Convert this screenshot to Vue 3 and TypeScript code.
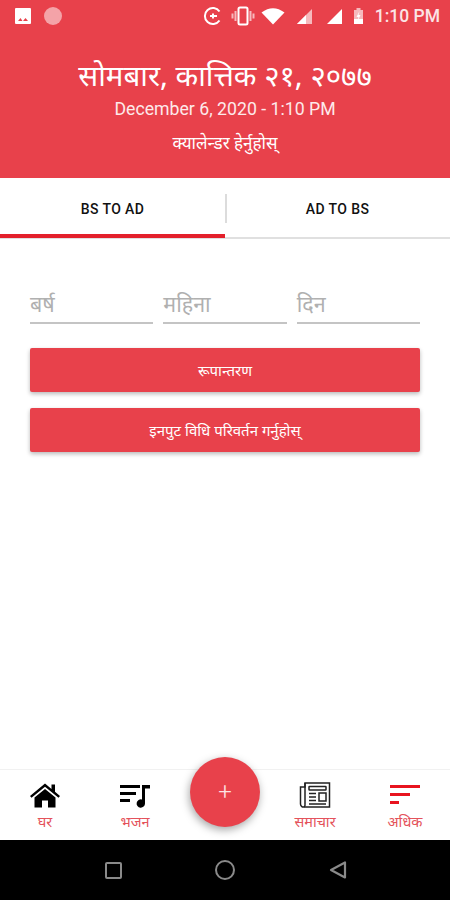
<template>
  <div class="screen">
    <header class="header">
      <div class="status-bar">
        <div class="status-left">
          <svg width="18" height="18" viewBox="0 0 18 18"><rect x="1" y="1" width="16" height="16" rx="1" fill="#fff" /><path d="M4 14l2.500-3 2 3zM9 14l2.500-3 2.500 3z" fill="#e8414b" /></svg>
          <span class="notif-dot"></span>
        </div>
        <div class="status-right">
          <svg class="i-sync" width="20" height="20" viewBox="0 0 20 20"><path d="M16.500 5.500A8 8 0 1 0 16.500 14.500" fill="none" stroke="#fff" stroke-width="2" /><path d="M7 10h7M10 7.500v5" stroke="#fff" stroke-width="2" /></svg>
          <svg class="i-vibrate" width="24" height="20" viewBox="0 0 24 20"><rect x="7.500" y="1.500" width="9" height="17" rx="1.500" fill="none" stroke="#fff" stroke-width="2" /><path d="M4.500 5v10M19.500 5v10M1.500 7.500v5M22.500 7.500v5" stroke="#f6b9bd" stroke-width="2" /></svg>
          <svg class="i-wifi" width="24" height="18" viewBox="0 0 24 18"><path d="M0.500 5.500Q12 -3 23.500 5.500L12 17.500z" fill="#fff" /></svg>
          <svg class="i-signal" width="17" height="17" viewBox="0 0 17 17"><path d="M16 1v15H1z" fill="#f6b9bd" /><path d="M10 7v9H1z" fill="#fff" /></svg>
          <svg class="i-signal2" width="17" height="17" viewBox="0 0 17 17"><path d="M16 1v15H1z" fill="#fff" /></svg>
          <svg class="i-battery" width="11" height="18" viewBox="0 0 11 18"><path d="M3.500 1h4v2H10v14H1V3h2.500z" fill="#f6b9bd" /><path d="M1 12h9v5H1z" fill="#fff" /><path d="M6.500 4L3.500 10h2l-1 4 3-6h-2z" fill="#fff" /></svg>
          <span class="clock">1:10 PM</span>
        </div>
      </div>
      <h1 class="nepali-date">सोमबार, कात्तिक २१, २०७७</h1>
      <p class="english-date">December 6, 2020 - 1:10 PM</p>
      <p class="calendar-link">क्यालेन्डर हेर्नुहोस्</p>
    </header>

    <nav class="tabs">
      <div class="tab active">BS TO AD</div>
      <div class="tab-divider"></div>
      <div class="tab">AD TO BS</div>
    </nav>

    <main class="content">
      <div class="inputs">
        <div v-for="field in fields" :key="field" class="input">{{ field }}</div>
      </div>
      <button class="action">रूपान्तरण</button>
      <button class="action">इनपुट विधि परिवर्तन गर्नुहोस्</button>
    </main>

    <footer class="bottom-nav">
      <div class="nav-item">
        <svg width="32" height="26" viewBox="0 0 32 26"><path d="M16 1.500L1 14l1.500 1.800L16 4.700l13.500 11.100L31 14l-5-4.200V2.500h-3.500v4.400z" fill="#000" /><path d="M16 7L5.500 15.500V25.500h7.500v-7h6v7h7.500V15.500z" fill="#000" /></svg>
        <span>घर</span>
      </div>
      <div class="nav-item">
        <svg width="32" height="26" viewBox="0 0 32 26"><path d="M1 3h20v3H1zM1 10h16v3H1zM1 17h10v3H1z" fill="#000" /><path d="M23 3h8v3.500h-5v15a4.200 4.200 0 1 1-3-4z" fill="#000" /></svg>
        <span>भजन</span>
      </div>
      <div class="nav-gap"></div>
      <div class="nav-item">
        <svg width="32" height="28" viewBox="0 0 32 28" fill="none" stroke="#222" stroke-width="1.500"><path d="M6 2h24.500v24H5a3 3 0 0 1-3.500-3V6H6z" /><path d="M6 2v21a3 3 0 0 1-1 3" /><rect x="10" y="5.500" width="17" height="3.500" rx="0.500" /><rect x="20" y="12" width="7" height="8" /><path d="M10 12.500h7M10 16h7M10 19.500h7M10 23h17" /></svg>
        <span>समाचार</span>
      </div>
      <div class="nav-item">
        <svg width="32" height="26" viewBox="0 0 32 26"><path d="M1 3h30v3H1zM1 11h20v3H1zM1 19h9v3H1z" fill="#e8141f" /></svg>
        <span>अधिक</span>
      </div>
      <button class="fab">+</button>
    </footer>

    <div class="android-nav">
      <span class="nav-square"></span>
      <span class="nav-circle"></span>
      <svg width="20" height="20" viewBox="0 0 20 20"><path d="M17 2.500v15L3 10z" fill="none" stroke="#8a8a8a" stroke-width="2.200" stroke-linejoin="round" /></svg>
    </div>
  </div>
</template>

<script setup lang="ts">
const fields: string[] = ['बर्ष', 'महिना', 'दिन'];
</script>

<style>
html,
body {
  margin: 0;
  background: #fff;
}
</style>

<style scoped>
.screen {
  width: 450px;
  height: 900px;
  display: flex;
  flex-direction: column;
  overflow: hidden;
  font-family: "Noto Sans", "Noto Sans Devanagari", "Lohit Devanagari", Roboto, sans-serif;
  background: #fff;
}

.header {
  height: 178px;
  background: #e8414b;
  color: #fff;
  text-align: center;
  flex-shrink: 0;
}

.status-bar {
  height: 32px;
  display: flex;
  align-items: center;
  justify-content: space-between;
  padding: 0 10px 0 14px;
}

.status-left,
.status-right {
  display: flex;
  align-items: center;
}

.status-left {
  gap: 12px;
}

.notif-dot {
  width: 18px;
  height: 18px;
  border-radius: 50%;
  background: #f4a3a8;
}

.i-vibrate {
  margin-left: 8px;
}

.i-wifi {
  margin-left: 6px;
}

.i-signal {
  margin-left: 11px;
}

.i-signal2 {
  margin-left: 13px;
}

.i-battery {
  margin-left: 10px;
}

.clock {
  font-family: Roboto, sans-serif;
  font-size: 17.500px;
  font-weight: 500;
  color: #fbe4e5;
  margin-left: 11px;
}

.nepali-date {
  margin: 24px 0 0;
  font-size: 29.500px;
  line-height: 38px;
  font-weight: 400;
}

.english-date {
  margin: 3px 0 0;
  font-family: Roboto, sans-serif;
  font-size: 17.700px;
  line-height: 24px;
  color: #fde9ea;
}

.calendar-link {
  margin: 10px 0 0;
  font-size: 17px;
  line-height: 24px;
}

.tabs {
  height: 61px;
  display: flex;
  align-items: flex-start;
  flex-shrink: 0;
  border-bottom: 2px solid #e0e0e0;
  box-sizing: border-box;
}

.tab {
  width: 225px;
  height: 60px;
  display: flex;
  align-items: center;
  justify-content: center;
  box-sizing: border-box;
  padding-top: 2px;
  font-family: Roboto, sans-serif;
  font-size: 14px;
  letter-spacing: 0.4px;
  font-weight: 500;
  color: #111;
}

.tab.active {
  border-bottom: 4px solid #e3202b;
  padding-top: 6px;
}

.tab-divider {
  width: 2px;
  height: 29px;
  margin: 16px -2px 0 0;
  background: #dcdcdc;
}

.content {
  flex: 1;
  padding: 51px 30px 0;
}

.inputs {
  display: grid;
  grid-template-columns: repeat(3, 1fr);
  column-gap: 10px;
  margin-bottom: 24px;
}

.input {
  height: 34px;
  box-sizing: border-box;
  border-bottom: 2px solid #c4c4c4;
  font-size: 21.500px;
  line-height: 28px;
  color: #b0b0b0;
}

.action {
  display: block;
  width: 100%;
  height: 44px;
  margin-bottom: 16px;
  border: none;
  border-radius: 2px;
  background: #e8414b;
  color: #fff;
  font-family: inherit;
  font-size: 15px;
  box-shadow: 0 2px 4px rgba(0, 0, 0, 0.28);
}

.bottom-nav {
  position: relative;
  height: 71px;
  display: flex;
  flex-shrink: 0;
  box-sizing: border-box;
  border-top: 1px solid #f1f1f1;
  background: #fff;
}

.nav-item {
  width: 90px;
  display: flex;
  flex-direction: column;
  align-items: center;
  padding-top: 11px;
  box-sizing: border-box;
  font-size: 14.500px;
  line-height: 20px;
  color: #e4525b;
}

.nav-item svg {
  height: 28px;
}

.nav-item span {
  margin-top: 2px;
}

.nav-gap {
  width: 90px;
}

.fab {
  position: absolute;
  left: 190px;
  top: -13px;
  width: 70px;
  height: 70px;
  padding: 0;
  border: none;
  border-radius: 50%;
  background: #e8414b;
  color: #fde3e4;
  font-family: Roboto, sans-serif;
  font-size: 24px;
  font-weight: 300;
  box-shadow: -1px 3px 8px rgba(0, 0, 0, 0.35);
}

.android-nav {
  height: 60px;
  flex-shrink: 0;
  background: #000;
  display: flex;
  align-items: center;
  justify-content: space-between;
  padding: 0 102px 0 105px;
}

.nav-square {
  width: 13px;
  height: 13px;
  border: 2px solid #8a8a8a;
  border-radius: 2px;
}

.nav-circle {
  width: 16px;
  height: 16px;
  border: 2px solid #8a8a8a;
  border-radius: 50%;
}
</style>
